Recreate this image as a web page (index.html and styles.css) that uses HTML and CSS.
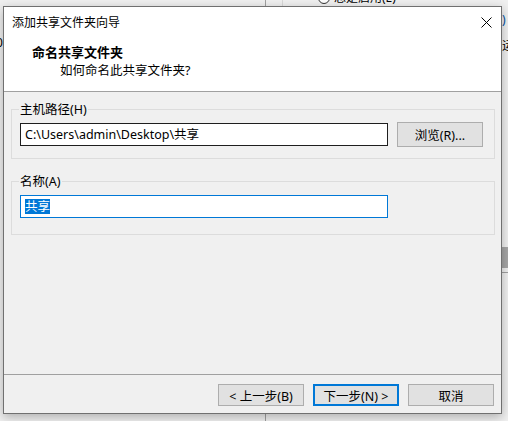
FILE: index.html
```html
<!DOCTYPE html>
<html lang="zh-CN">
<head>
  <meta charset="UTF-8" />
  <title>添加共享文件夹向导</title>
  <link rel="stylesheet" href="styles.css">
</head>
<body>

<div class="desktop">
  <!-- 后面的设置窗口，只露出一点边 -->
  <div class="bg-line bg-line-a"></div>
  <div class="bg-line bg-line-b"></div>
  <div class="bg-radio"><span class="radio-dot"></span>总是启用(E)</div>
  <div class="bg-frag bg-frag-1">)</div>
  <div class="bg-frag bg-frag-2">运</div>
  <div class="bg-frag bg-frag-3">0</div>
  <div class="bg-thumb"></div>
  <div class="bg-rule"></div>

  <div class="dialog">
    <div class="titlebar">
      <span class="title">添加共享文件夹向导</span>
      <span class="close">
        <svg width="11" height="11" viewBox="0 0 11 11">
          <path d="M0.5 0.5 L10.5 10.5 M10.5 0.5 L0.5 10.5" stroke="#000" stroke-width="1" fill="none"/>
        </svg>
      </span>
    </div>

    <div class="header">
      <div class="heading">命名共享文件夹</div>
      <div class="subheading">如何命名此共享文件夹?</div>
    </div>

    <div class="content">
      <div class="group group-path">
        <span class="group-label">主机路径(H)</span>
        <div class="row">
          <div class="textbox">C:\Users\admin\Desktop\共享</div>
          <button class="btn">浏览(R)...</button>
        </div>
      </div>

      <div class="group group-name">
        <span class="group-label">名称(A)</span>
        <div class="row">
          <div class="textbox focused"><span class="selected">共享</span></div>
        </div>
      </div>
    </div>

    <div class="footer">
      <button class="btn">&lt; 上一步(B)</button>
      <button class="btn btn-default">下一步(N) &gt;</button>
      <button class="btn">取消</button>
    </div>
  </div>
</div>

</body>
</html>
```

FILE: styles.css
```css
  body {
    margin: 0;
    background-color: #f0f0f0;
    font-family: "Noto Sans", "Noto Sans CJK SC", sans-serif;
    font-size: 12px;
    color: #000;
  }

  .desktop {
    position: relative;
    width: 508px;
    height: 421px;
    overflow: hidden;
    background-color: #f0f0f0;
  }

  /* 背景窗口的碎片 */
  .bg-line {
    position: absolute;
    top: 0;
    width: 1px;
    background-color: #a0a0a0;
  }

  .bg-line-a {
    left: 265px;
    height: 421px;
  }

  .bg-line-b {
    left: 282px;
    height: 10px;
    background-color: #d8d8d8;
  }

  .bg-radio {
    position: absolute;
    left: 318px;
    top: -9px;
    line-height: 14px;
    display: flex;
    align-items: center;
    gap: 4px;
  }

  .radio-dot {
    width: 10px;
    height: 10px;
    border: 1px solid #333;
    border-radius: 50%;
    background: #fff;
  }

  .bg-frag {
    position: absolute;
    left: 502px;
    line-height: 16px;
  }

  .bg-frag-1 { top: 12px; color: #0050a0; }
  .bg-frag-2 { top: 38px; }
  .bg-frag-3 { top: 35px; left: -4px; }

  .bg-thumb {
    position: absolute;
    left: 502px;
    top: 247px;
    width: 6px;
    height: 21px;
    background-color: #a6a6a6;
  }

  .bg-rule {
    position: absolute;
    left: 502px;
    top: 272px;
    width: 6px;
    height: 1px;
    background-color: #a0a0a0;
  }

  /* 向导对话框 */
  .dialog {
    position: absolute;
    left: 3px;
    top: 6px;
    width: 499px;
    height: 408px;
    box-sizing: border-box;
    border: 1px solid #707070;
    background-color: #f0f0f0;
    box-shadow: 0 3px 10px rgba(0, 0, 0, 0.28);
    display: flex;
    flex-direction: column;
  }

  .titlebar {
    height: 30px;
    background-color: #fff;
    display: flex;
    align-items: center;
    justify-content: space-between;
    padding-left: 8px;
  }

  .title {
    line-height: 16px;
    margin-top: 1px;
  }

  .close {
    width: 30px;
    height: 30px;
    display: flex;
    align-items: center;
    justify-content: center;
  }

  .header {
    height: 54px;
    background-color: #fff;
    border-bottom: 1px solid #a0a0a0;
    box-sizing: content-box;
  }

  .heading {
    font-weight: bold;
    font-size: 13px;
    line-height: 16px;
    margin: 7px 0 0 28px;
  }

  .subheading {
    line-height: 16px;
    font-size: 12.5px;
    margin: 3px 0 0 56px;
  }

  .content {
    flex: 1;
    padding: 17px 6px 0 7px;
  }

  .group {
    border: 1px solid #dcdcdc;
    padding: 0 10px 11px 8px;
  }

  .group-name {
    margin-top: 22px;
    padding-bottom: 16px;
  }

  .group-label {
    display: block;
    width: fit-content;
    margin-top: -8px;
    margin-left: -1px;
    padding: 0 1px;
    line-height: 16px;
    font-size: 12.5px;
    background-color: #f0f0f0;
  }

  .row {
    display: flex;
    align-items: center;
    gap: 9px;
    margin-top: 4px;
  }

  .group-name .row {
    margin-top: 5px;
  }

  .textbox {
    width: 368px;
    height: 23px;
    box-sizing: border-box;
    border: 1px solid #1e1e1e;
    background-color: #fff;
    padding: 0 4px;
    line-height: 21px;
    font-size: 12.5px;
    white-space: nowrap;
  }

  .textbox.focused {
    border-color: #0078d7;
  }

  .selected {
    background-color: #0078d7;
    color: #fff;
    display: inline-block;
    line-height: 15px;
    vertical-align: middle;
    margin-top: -2px;
  }

  .btn {
    width: 86px;
    height: 25px;
    box-sizing: border-box;
    border: 1px solid #adadad;
    background-color: #e1e1e1;
    font-family: inherit;
    font-size: 12.5px;
    color: #000;
    padding: 0;
  }

  .footer {
    border-top: 1px solid #a0a0a0;
    height: 29px;
    display: flex;
    justify-content: flex-end;
    gap: 9px;
    padding: 9px 7px 0 0;
  }

  .footer .btn {
    height: 22px;
  }

  .btn-default {
    border: 2px solid #0078d7;
  }
```
